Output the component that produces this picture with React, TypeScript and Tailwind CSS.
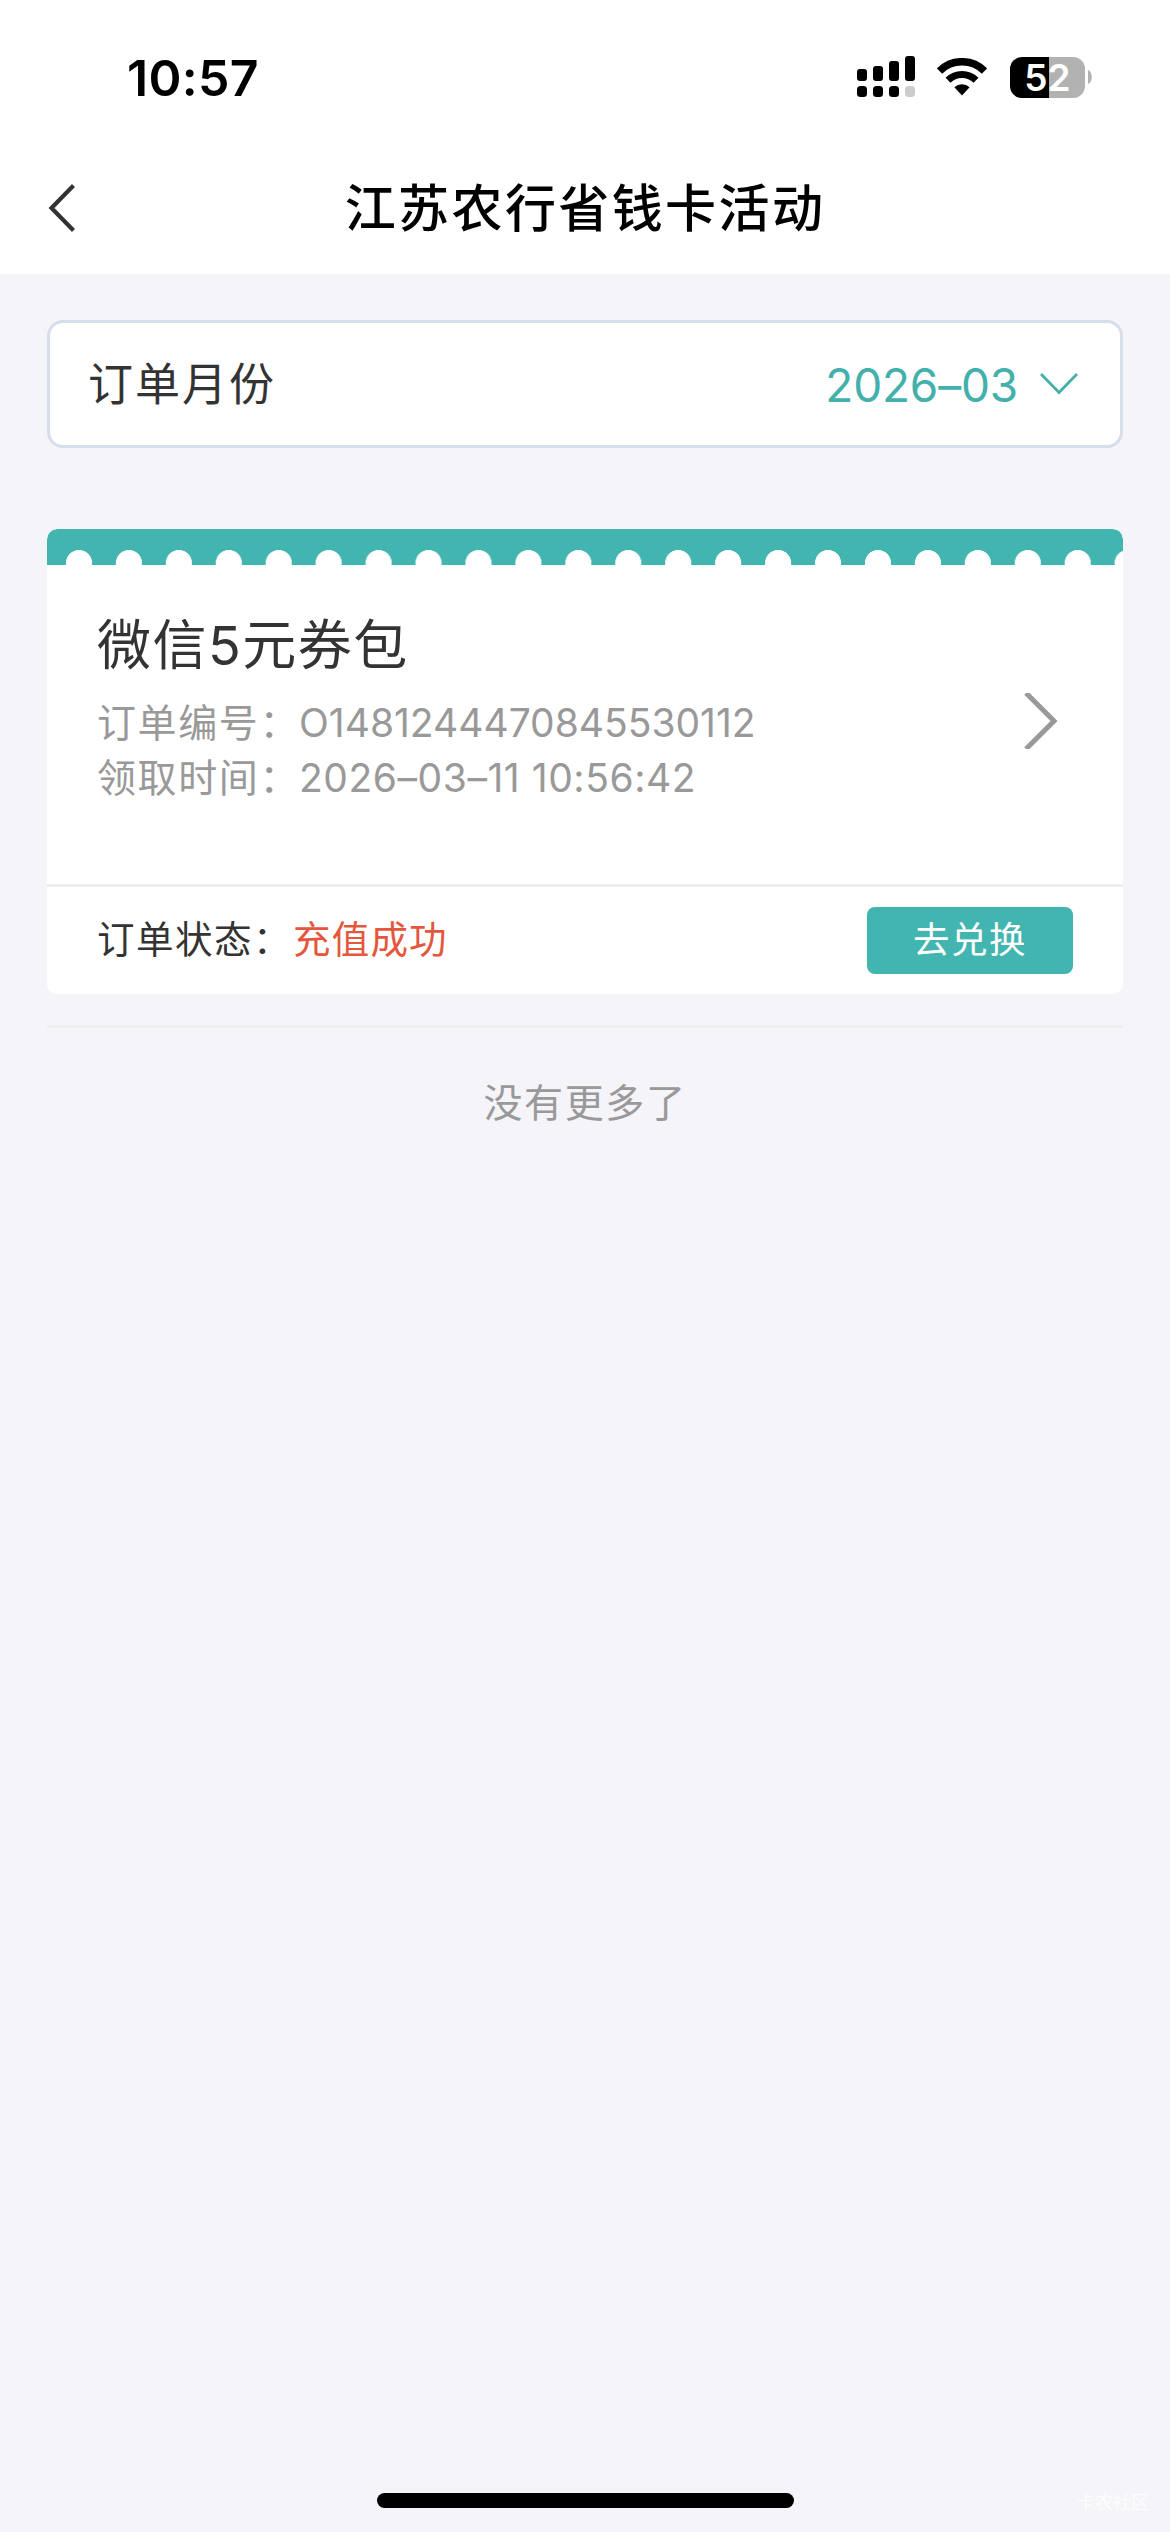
const SignalIcon = () => (
  <svg viewBox="0 0 60 42" fill="#000" className="w-[60px] h-[42px]">
    <rect x="0" y="13" width="10" height="12" rx="3" />
    <rect x="16" y="10" width="10" height="15" rx="3" />
    <rect x="32" y="5" width="10" height="20" rx="3" />
    <rect x="48" y="0" width="10" height="25" rx="3" />
    <rect x="0" y="30" width="10" height="11" rx="3.5" />
    <rect x="16" y="30" width="10" height="11" rx="3.5" />
    <rect x="32" y="30" width="10" height="11" rx="3.5" />
    <rect x="48" y="30" width="10" height="11" rx="3.5" fill="#cccccc" />
  </svg>
);

const WifiIcon = () => (
  <svg viewBox="0 0 50 38" fill="none" stroke="#000" className="w-[50px] h-[38px]">
    <path d="M2.5 13 A32 32 0 0 1 47.5 13" strokeWidth="7.6" />
    <path d="M11 22.2 A19.8 19.8 0 0 1 39 22.2" strokeWidth="7" />
    <path d="M25 37.5 L17.4 29.3 A11 11 0 0 1 32.6 29.3 Z" fill="#000" stroke="none" />
  </svg>
);

const Battery = () => (
  <div className="flex items-center gap-[3px]">
    <div className="w-[75px] h-[41px] rounded-[12px] bg-[linear-gradient(90deg,#000_39px,#b2b2b2_39px)] flex items-center justify-center text-white text-[37px] font-semibold leading-[41px]">
      52
    </div>
    <svg viewBox="0 0 4 14" className="w-[4px] h-[14px]">
      <path d="M0 0 C5 2 5 12 0 14 Z" fill="#b2b2b2" />
    </svg>
  </div>
);

const rows = [
  { label: "订单编号：", value: "O1481244470845530112", spacing: "tracking-[0px]" },
  { label: "领取时间：", value: "2026–03–11 10:56:42", spacing: "tracking-[0.55px]" },
];

export default function App() {
  return (
    <div lang="zh-CN" className="relative w-[1170px] h-[2532px] bg-[#f4f4f9] flex flex-col overflow-hidden font-[Inter,'Noto_Sans_CJK_SC',sans-serif] text-[#333333]">
      <header className="h-[274px] bg-white shrink-0">
        {/* Status bar */}
        <div className="h-[154px] pl-[127px] pr-[78px] flex items-center justify-between text-black">
          <span className="text-[50px] font-semibold leading-none pt-[2px] tracking-[0.3px]">10:57</span>
          <div className="flex items-center">
            <SignalIcon />
            <div className="ml-[20px] mr-[23px]"><WifiIcon /></div>
            <Battery />
          </div>
        </div>
        {/* Nav bar */}
        <div className="h-[108px] px-[48px] grid grid-cols-[60px_1fr_60px] items-center">
          <svg viewBox="0 0 28 48" fill="none" stroke="#333333" strokeWidth="4.2" className="w-[28px] h-[48px]">
            <path d="M25.5 1.5 L3.5 24 L25.5 46.5" />
          </svg>
          <h1 className="text-center text-black text-[51px] font-medium leading-none tracking-[2.4px] whitespace-nowrap">江苏农行省钱卡活动</h1>
        </div>
      </header>

      <main className="px-[47px] pt-[46px]">
        {/* Month picker */}
        <div className="h-[128px] rounded-[16px] border-[3px] border-[#d5deea] bg-white pl-[38px] pr-[42px] flex items-center">
          <span className="text-[45px] leading-none tracking-[2px]">订单月份</span>
          <span className="ml-auto pt-[2px] text-[46px] leading-none tracking-[-0.2px] text-[#43b0ab]">2026–03</span>
          <svg viewBox="0 0 38 24" fill="none" stroke="#43b0ab" strokeWidth="2.8" className="w-[38px] h-[24px] ml-[22px]">
            <path d="M1 2 L19 20.5 L37 2" />
          </svg>
        </div>

        {/* Order card */}
        <div className="mt-[81px] h-[465px] rounded-[10px] bg-white overflow-hidden">
          <div className="h-[36px] rounded-t-[10px] bg-[radial-gradient(circle_at_32px_34px,#fff_12.7px,#43b5b1_13.3px)] bg-[length:49.95px_36px]" />
          <div className="h-[319px] px-[50px] flex">
            <div className="pt-[54px]">
              <h2 className="text-[54px] leading-[54px] tracking-[1.5px]">微信5元券包</h2>
              <div className="mt-[22px] text-[39px] leading-[55px] text-[#999999]">
                {rows.map((row) => (
                  <div key={row.label} className="flex">
                    <span className="w-[202px] tracking-[1.6px] whitespace-nowrap">{row.label}</span>
                    <span className={`whitespace-nowrap ${row.spacing}`}>{row.value}</span>
                  </div>
                ))}
              </div>
            </div>
            <svg viewBox="0 0 34 56" fill="none" stroke="#999999" strokeWidth="5" className="w-[34px] h-[56px] ml-auto mr-[15px] mt-[128px]">
              <path d="M2 0 L30 28 L2 56" />
            </svg>
          </div>
          <div className="h-[110px] border-t-[3px] border-[#eeeeee] px-[50px] flex items-center">
            <span className="w-[196px] text-[37.5px] tracking-[1.5px] whitespace-nowrap">订单状态：</span>
            <span className="text-[37.5px] tracking-[1.2px] text-[#e4573d]">充值成功</span>
            <button className="ml-auto w-[206px] h-[67px] rounded-[8px] bg-[#43b5b1] text-white text-[36.5px] tracking-[1.5px]">去兑换</button>
          </div>
        </div>

        <div className="mt-[31px] h-[3px] bg-[#eeeeee]" />
        <p className="mt-[50px] text-center text-[39px] leading-[50px] tracking-[1.6px] text-[#999999]">没有更多了</p>
      </main>

      {/* Home indicator */}
      <div className="mt-auto mb-[24px] mx-auto w-[417px] h-[15px] rounded-full bg-black" />
      <span className="absolute right-[21px] bottom-[20px] text-[18px] leading-none text-white/80">卡农社区</span>
    </div>
  );
}
